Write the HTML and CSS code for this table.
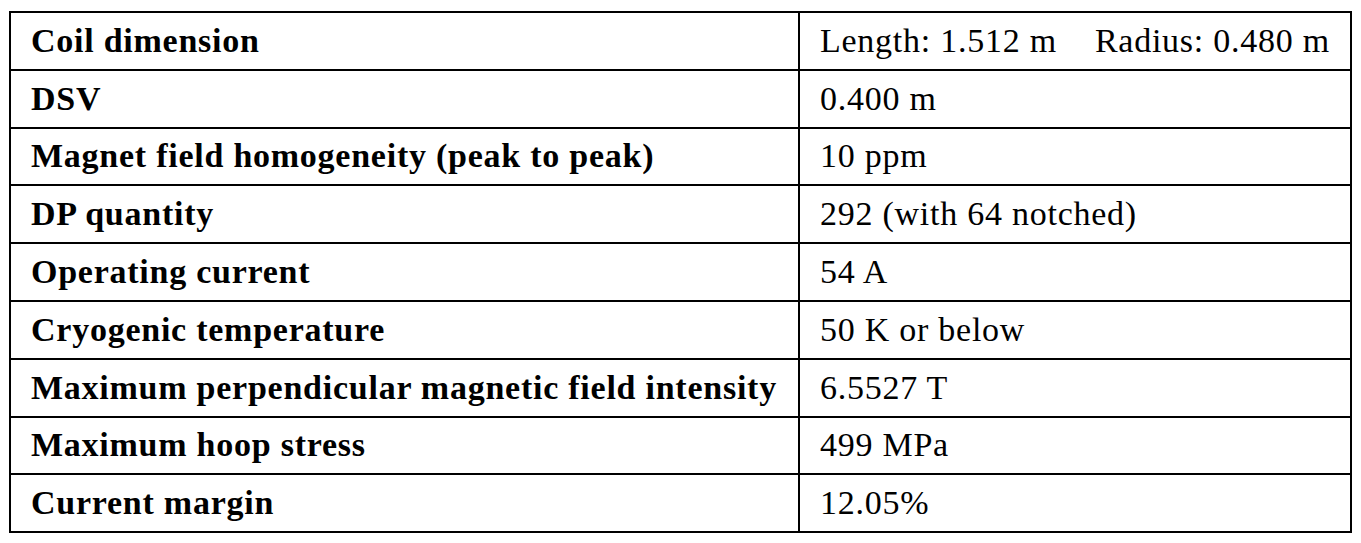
FILE: index.html
```html
<!DOCTYPE html>
<html lang="en">
<head>
    <meta charset="UTF-8" />
    <title>Magnet parameters</title>
    <link rel="stylesheet" href="styles.css">
</head>
<body>

<table class="spec-table">
    <tr><td class="label">Coil dimension</td><td class="value">Length: 1.512 m<span class="gap"></span>Radius: 0.480 m</td></tr>
    <tr><td class="label">DSV</td><td class="value">0.400 m</td></tr>
    <tr><td class="label">Magnet field homogeneity (peak to peak)</td><td class="value">10 ppm</td></tr>
    <tr><td class="label">DP quantity</td><td class="value">292 (with 64 notched)</td></tr>
    <tr><td class="label">Operating current</td><td class="value">54 A</td></tr>
    <tr><td class="label">Cryogenic temperature</td><td class="value">50 K or below</td></tr>
    <tr><td class="label">Maximum perpendicular magnetic field intensity</td><td class="value">6.5527 T</td></tr>
    <tr><td class="label">Maximum hoop stress</td><td class="value">499 MPa</td></tr>
    <tr><td class="label">Current margin</td><td class="value">12.05%</td></tr>
</table>

</body>
</html>
```

FILE: styles.css
```css
body {
    margin: 0;
    padding: 11px 0 0 9px;
    background-color: #ffffff;
    font-family: "Liberation Serif", "Times New Roman", serif;
    color: #000;
}

.spec-table {
    border-collapse: collapse;
    width: 1343px;
}

.spec-table td {
    border: 2px solid #000;
    height: 55.8px;
    padding: 0 20px;
    font-size: 34px;
    letter-spacing: 0.75px;
    vertical-align: middle;
    white-space: nowrap;
}

.label {
    width: 748px;
    font-weight: bold;
}

.value {
    font-weight: normal;
}

.gap {
    display: inline-block;
    width: 38px;
}
```
